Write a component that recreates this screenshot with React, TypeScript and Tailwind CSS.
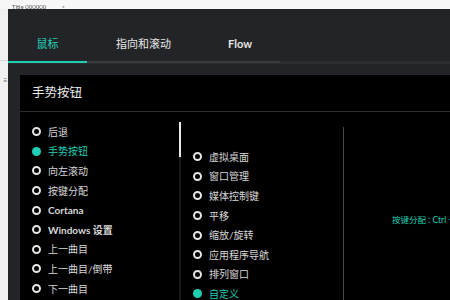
const FONT = "font-['Lato','Noto_Sans_CJK_SC',sans-serif]";

const leftItems = [
  { label: '后退' },
  { label: '手势按钮', active: true },
  { label: '向左滚动' },
  { label: '按键分配' },
  { label: 'Cortana', bold: true },
  { label: 'Windows 设置', bold: true },
  { label: '上一曲目' },
  { label: '上一曲目/倒带' },
  { label: '下一曲目' },
];

const midItems = [
  { label: '虚拟桌面' },
  { label: '窗口管理' },
  { label: '媒体控制键' },
  { label: '平移' },
  { label: '缩放/旋转' },
  { label: '应用程序导航' },
  { label: '排列窗口' },
  { label: '自定义', active: true },
];

type Item = { label: string; active?: boolean; bold?: boolean };

const Radio = ({ active }: { active?: boolean }) =>
  active ? (
    <span className="w-[9px] h-[9px] rounded-full bg-[#1fcfb5] shrink-0" />
  ) : (
    <span className="w-[9px] h-[9px] rounded-full border-2 border-[#e6e6e6] shrink-0" />
  );

const Row = ({ item }: { item: Item }) => (
  <div className="h-[19.6px] flex items-center gap-[7px]">
    <Radio active={item.active} />
    <span
      className={`text-[10px] leading-none whitespace-nowrap ${item.active ? 'text-[#1fcfb5]' : 'text-[#d8d8d8]'} ${item.bold ? 'font-bold' : ''}`}
    >
      {item.label}
    </span>
  </div>
);

export default function App() {
  return (
    <div className={`w-[450px] h-[300px] overflow-hidden bg-[#eeeeee] flex flex-col ${FONT}`}>
      {/* top strip behind the window */}
      <div className="h-[9px] bg-[#f7f7f7] flex items-end gap-4 pl-[12px] shrink-0">
        <span className="text-[6px] leading-none text-[#555] blur-[0.6px] translate-y-[1px]">Title 000000</span>
        <span className="text-[6px] leading-none text-[#999] blur-[0.6px] translate-y-[1px]">▪</span>
      </div>

      <div className="flex flex-1 min-h-0">
        {/* left sliver of the app behind */}
        <div className="w-[8px] shrink-0 bg-[#f0f0f0] flex flex-col">
          <div className="h-[52px] border-b border-[#d8d8d8]" />
          <div className="mt-[15px] text-[8px] leading-none text-[#777] pl-[3px]">≡</div>
        </div>

        {/* window */}
        <div className="flex-1 bg-[#232427] flex flex-col min-w-0">
          {/* tabs */}
          <div className="h-[55px] flex shrink-0 border-b border-[#2c2d30]">
            <div className="w-[79px] flex flex-col">
              <div className="flex-1 flex items-end justify-center pb-[9px] text-[11px] text-[#1fcfb5]">鼠标</div>
              <div className="h-[2px] bg-[#1fcfb5]" />
            </div>
            <div className="w-[113px] flex flex-col">
              <div className="flex-1 flex items-end justify-center pb-[9px] text-[11px] text-[#e6e6e6]">指向和滚动</div>
              <div className="h-[2px] bg-[#3a3b3e]" />
            </div>
            <div className="w-[80px] flex flex-col">
              <div className="flex-1 flex items-end justify-center pb-[9px] text-[11px] font-bold text-[#e6e6e6]">Flow</div>
              <div className="h-[2px] bg-[#3a3b3e]" />
            </div>
            <div className="flex-1 flex flex-col">
              <div className="flex-1" />
              <div className="h-[2px] bg-[#2b2c2f]" />
            </div>
          </div>

          {/* panel */}
          <div className="flex-1 pl-[12px] pt-[11px] min-h-0">
            <div className="h-full bg-black flex flex-col">
              <div className="h-[37px] shrink-0 flex items-center pl-[12px] text-[12.5px] text-[#ececec] border-b border-[#2e2e2e]">
                手势按钮
              </div>
              <div className="flex-1 flex min-h-0">
                {/* left list */}
                <div className="w-[159px] shrink-0 pl-[12px] pt-[10px]">
                  {leftItems.map((it) => (
                    <Row key={it.label} item={it} />
                  ))}
                </div>
                {/* scrollbar */}
                <div className="w-[2px] shrink-0 pt-[10px] flex flex-col">
                  <div className="h-[35px] bg-[#e8e8e8]" />
                  <div className="flex-1 bg-[#1a1a1a]" />
                </div>
                {/* middle list */}
                <div className="w-[162px] shrink-0 pl-[12px] pt-[35px]">
                  {midItems.map((it) => (
                    <Row key={it.label} item={it} />
                  ))}
                </div>
                {/* divider */}
                <div className="w-[1px] shrink-0 mt-[15px] bg-[#4a4a4a]" />
                {/* right detail */}
                <div className="flex-1 min-w-0 overflow-hidden pl-[48px] pt-[93px]">
                  <span className="text-[8.5px] leading-none whitespace-nowrap text-[#1fcfb5]">按键分配 : Ctrl +</span>
                </div>
              </div>
            </div>
          </div>
        </div>
      </div>
    </div>
  );
}
